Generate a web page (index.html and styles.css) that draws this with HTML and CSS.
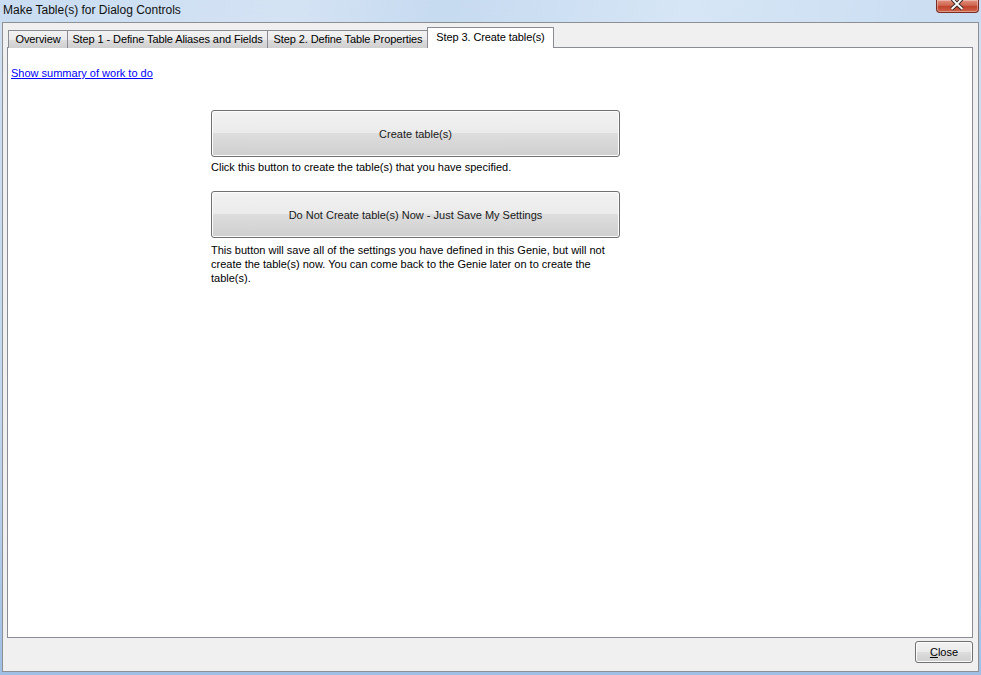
FILE: index.html
```html
<!DOCTYPE html>
<html>
<head>
<meta charset="utf-8">
<title>Make Table(s) for Dialog Controls</title>
<link rel="stylesheet" href="styles.css">
</head>
<body>
<div class="window">
  <div class="titlebar">
    <span class="title">Make Table(s) for Dialog Controls</span>
    <span class="close-x">
      <svg width="43" height="14" viewBox="0 0 43 14">
        <path d="M16 -2 L21.5 4 L27 -2 M16 9 L21.5 4 L27 9" stroke="#3a2a2a" stroke-width="4" fill="none"/>
        <path d="M16 -2 L21.5 4 L27 -2 M16 9 L21.5 4 L27 9" stroke="#ffffff" stroke-width="2" fill="none"/>
      </svg>
    </span>
  </div>
  <div class="client">
    <div class="tabs">
      <div class="tab t1">Overview</div>
      <div class="tab t2">Step 1 - Define Table Aliases and Fields</div>
      <div class="tab t3">Step 2. Define Table Properties</div>
      <div class="tab t4 active">Step 3. Create table(s)</div>
    </div>
    <div class="panel">
      <a class="summary" href="#">Show summary of work to do</a>
      <div class="actions">
        <div class="bigbtn">Create table(s)</div>
        <p class="note">Click this button to create the table(s) that you have specified.</p>
        <div class="bigbtn second">Do Not Create table(s) Now - Just Save My Settings</div>
        <p class="note multi">This button will save all of the settings you have defined in this Genie, but will not<br>create the table(s) now. You can come back to the Genie later on to create the<br>table(s).</p>
      </div>
    </div>
    <div class="footer">
      <div class="closebtn"><u>C</u>lose</div>
    </div>
  </div>
</div>
</body>
</html>
```

FILE: styles.css
```css
* { box-sizing: border-box; }
html, body {
  margin: 0;
  padding: 0;
  width: 981px;
  height: 675px;
  overflow: hidden;
  font-family: "Liberation Sans", Arial, sans-serif;
  font-size: 11px;
  color: #000;
}
.window {
  width: 981px;
  height: 675px;
  background: linear-gradient(to bottom, #cfe0f2 0%, #c2d7ee 60%, #9fbfe4 100%);
  display: flex;
  flex-direction: column;
}
.titlebar {
  height: 22px;
  display: flex;
  align-items: flex-start;
  background: linear-gradient(100deg, #c9dcf1 0%, #d4e3f4 30%, #c6daf0 45%, #d6e6f6 70%, #c9dcf1 100%);
}
.title {
  font-size: 12px;
  line-height: 18px;
  padding-left: 3px;
  padding-top: 1px;
  color: #101010;
}
.close-x {
  margin-left: auto;
  margin-right: 2px;
  width: 43px;
  height: 13px;
  border: 1px solid #7a2c22;
  border-top: none;
  border-radius: 0 0 4px 4px;
  background: linear-gradient(to bottom, #e0907e 0%, #cf6650 45%, #c0432c 55%, #d2654b 100%);
  box-shadow: inset 0 0 0 1px rgba(255,255,255,0.35);
  overflow: hidden;
  display: flex;
}
.close-x svg { display: block; margin-left: -1px; }
.client {
  flex: 1;
  margin: 0 2px 3px 2px;
  border: 1px solid #8c8f94;
  background: #f0f0f0;
  display: flex;
  flex-direction: column;
}
.tabs {
  display: flex;
  align-items: flex-end;
  height: 25px;
  padding-left: 5px;
  margin-bottom: -1px;
  position: relative;
  z-index: 1;
}
.tab {
  height: 18px;
  line-height: 16px;
  padding: 0;
  border: 1px solid #898c95;
  border-bottom: none;
  border-right: none;
  background: linear-gradient(to bottom, #f2f2f2 0%, #ebebeb 50%, #dddddd 51%, #cfcfcf 100%);
  white-space: nowrap;
  text-align: center;
  letter-spacing: -0.1px;
}
.t1 { width: 59px; }
.t2 { width: 200px; }
.t3 { width: 161px; }
.tab.active {
  width: 127px;
  height: 21px;
  line-height: 18px;
  background: #ffffff;
  border-right: 1px solid #898c95;
  margin-left: -1px;
  padding-bottom: 2px;
}
.panel {
  margin-left: 4px;
  width: 966px;
  height: 591px;
  border: 1px solid #898c95;
  background: #ffffff;
  padding: 19px 0 0 3px;
}
.summary {
  display: block;
  color: #0000ff;
  text-decoration: underline;
  line-height: 13px;
  width: max-content;
}
.actions {
  margin: 30px 0 0 200px;
  width: 409px;
}
.bigbtn {
  height: 47px;
  border: 1px solid #707070;
  border-radius: 3px;
  background: linear-gradient(to bottom, #f2f2f2 0%, #ebebeb 48%, #dddddd 50%, #cfcfcf 100%);
  box-shadow: inset 0 0 0 1px #fcfcfc;
  display: flex;
  align-items: center;
  justify-content: center;
  color: #1a1a1a;
}
.note {
  margin: 4px 0 0 0;
  line-height: 13px;
}
.bigbtn.second { margin-top: 17px; }
.note.multi {
  margin-top: 5px;
  line-height: 14px;
}
.footer {
  display: flex;
  justify-content: flex-end;
  padding: 3px 5px 0 0;
}
.closebtn {
  width: 58px;
  height: 22px;
  border: 1px solid #707070;
  border-radius: 3px;
  background: linear-gradient(to bottom, #f2f2f2 0%, #ebebeb 48%, #dddddd 50%, #cfcfcf 100%);
  box-shadow: inset 0 0 0 1px #fcfcfc;
  display: flex;
  align-items: center;
  justify-content: center;
}
```
